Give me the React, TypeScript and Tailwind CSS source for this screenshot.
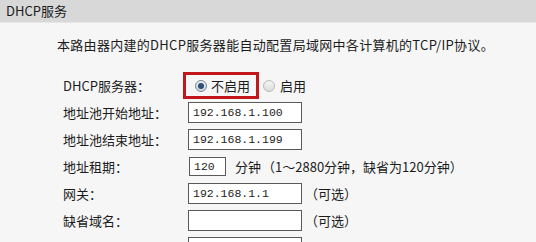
import React from "react";

const cjk = { fontFamily: '"Noto Sans CJK SC", "Noto Sans", sans-serif' };
const mono = { fontFamily: '"Liberation Mono", "DejaVu Sans Mono", monospace' };

function Radio({ checked }: { checked?: boolean }) {
  return (
    <span
      className={
        "inline-flex h-[12px] w-[12px] items-center justify-center rounded-full border " +
        (checked
          ? "border-[#7a8a99] bg-gradient-to-b from-[#e9eef3] to-[#c9d3dc]"
          : "border-[#b9b9b9] bg-gradient-to-b from-[#f6f6f6] to-[#dcdcdc]")
      }
    >
      {checked && <span className="h-[6px] w-[6px] rounded-full bg-[#2f4f73]" />}
    </span>
  );
}

function TextBox({ value, w = "w-[114px]", h = "h-[21px]" }: { value?: string; w?: string; h?: string }) {
  return (
    <div
      className={`${w} ${h} flex items-center border border-[#5a5a5a] bg-white pl-[4px] text-[11.5px] text-[#222]`}
      style={mono}
    >
      {value}
    </div>
  );
}

function Row({ label, children }: { label: string; children: React.ReactNode }) {
  return (
    <div className="flex h-[27px] items-center">
      <div className="w-[125px] shrink-0">{label}</div>
      <div className="flex items-center">{children}</div>
    </div>
  );
}

export default function App() {
  return (
    <div
      className="h-[242px] w-[536px] overflow-hidden bg-[#f6f6f6] text-[13px] leading-[18px] text-[#1c1c1c]"
      style={cjk}
    >
      <div className="flex h-[23px] items-center border-b border-[#e6e6e6] bg-[#d8d8d8] pl-[6px]">
        DHCP服务
      </div>

      <div className="pl-[57px] pt-[13px] tracking-[0.3px]">
        本路由器内建的DHCP服务器能自动配置局域网中各计算机的TCP/IP协议。
      </div>

      <div className="mt-[18px] pl-[63px]">
        <Row label="DHCP服务器：">
          <div className="-ml-[5px] flex h-[27px] items-center gap-[4px] border-[3px] border-[#c3161c] pl-[9px] pr-[6px]">
            <Radio checked />
            <span>不启用</span>
          </div>
          <div className="ml-[4px] flex items-center gap-[5px]">
            <Radio />
            <span>启用</span>
          </div>
        </Row>
        <Row label="地址池开始地址：">
          <TextBox value="192.168.1.100" />
        </Row>
        <Row label="地址池结束地址：">
          <TextBox value="192.168.1.199" />
        </Row>
        <Row label="地址租期：">
          <div className="ml-[1px]">
            <TextBox value="120" w="w-[37px]" h="h-[19px]" />
          </div>
          <span className="ml-[9px]">分钟</span>
          <span className="ml-[1px]">（1～2880分钟，缺省为120分钟）</span>
        </Row>
        <Row label="网关：">
          <TextBox value="192.168.1.1" />
          <span className="ml-[3px]">（可选）</span>
        </Row>
        <Row label="缺省域名：">
          <TextBox />
          <span className="ml-[3px]">（可选）</span>
        </Row>
        <Row label="主DNS服务器：">
          <TextBox value="0.0.0.0" />
          <span className="ml-[3px]">（可选）</span>
        </Row>
      </div>
    </div>
  );
}
